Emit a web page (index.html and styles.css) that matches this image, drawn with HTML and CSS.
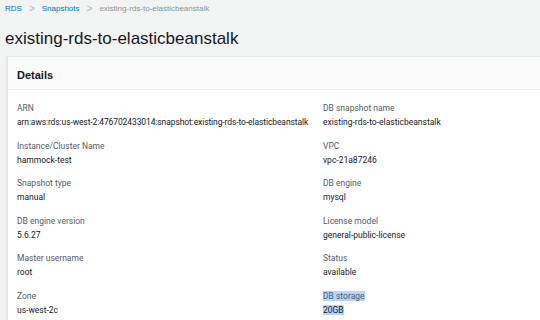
FILE: index.html
```html
<!DOCTYPE html>
<html>
<head>
    <title>existing-rds-to-elasticbeanstalk</title>
    <link rel="stylesheet" href="styles.css">
</head>
<body>
    <div class="page">
        <div class="breadcrumb">
            <a href="#">RDS</a>
            <span class="sep">&gt;</span>
            <a href="#">Snapshots</a>
            <span class="sep">&gt;</span>
            <span class="current">existing-rds-to-elasticbeanstalk</span>
        </div>

        <h1 class="title">existing-rds-to-elasticbeanstalk</h1>

        <div class="panel">
            <div class="panel-header">
                <h2>Details</h2>
            </div>
            <div class="panel-body">
                <div class="column">
                    <div class="field">
                        <div class="label">ARN</div>
                        <div class="value arn">arn:aws:rds:us-west-2:476702433014:snapshot:existing-rds-to-elasticbeanstalk</div>
                    </div>
                    <div class="field">
                        <div class="label">Instance/Cluster Name</div>
                        <div class="value">hammock-test</div>
                    </div>
                    <div class="field">
                        <div class="label">Snapshot type</div>
                        <div class="value">manual</div>
                    </div>
                    <div class="field">
                        <div class="label">DB engine version</div>
                        <div class="value">5.6.27</div>
                    </div>
                    <div class="field">
                        <div class="label">Master username</div>
                        <div class="value">root</div>
                    </div>
                    <div class="field">
                        <div class="label">Zone</div>
                        <div class="value">us-west-2c</div>
                    </div>
                </div>
                <div class="column">
                    <div class="field">
                        <div class="label">DB snapshot name</div>
                        <div class="value">existing-rds-to-elasticbeanstalk</div>
                    </div>
                    <div class="field">
                        <div class="label">VPC</div>
                        <div class="value">vpc-21a87246</div>
                    </div>
                    <div class="field">
                        <div class="label">DB engine</div>
                        <div class="value">mysql</div>
                    </div>
                    <div class="field">
                        <div class="label">License model</div>
                        <div class="value">general-public-license</div>
                    </div>
                    <div class="field">
                        <div class="label">Status</div>
                        <div class="value">available</div>
                    </div>
                    <div class="field">
                        <div class="label"><span class="selected">DB storage</span></div>
                        <div class="value"><span class="selected">20GB</span></div>
                    </div>
                </div>
            </div>
        </div>
    </div>
</body>
</html>
```

FILE: styles.css
```css
* {
    margin: 0;
    padding: 0;
    box-sizing: border-box;
}

body {
    background: #f2f3f3;
    color: #16191f;
    font-family: 'Liberation Sans', Arial, sans-serif;
    overflow: hidden;
}

.page {
    padding: 2px 0 0 5px;
}

.breadcrumb {
    display: flex;
    align-items: center;
    gap: 7px;
    font-size: 8px;
    height: 12px;
    color: #879596;
}

.breadcrumb a {
    color: #0073bb;
    text-decoration: none;
}

.breadcrumb .sep {
    color: #aab7b8;
    font-size: 10px;
}

.title {
    font-size: 17px;
    font-weight: 400;
    color: #16191f;
    margin-top: 14px;
    line-height: 22px;
}

.panel {
    margin: 6px 0 0 2px;
    background: #fff;
    border: 1px solid #e4e7e7;
    border-right: none;
    box-shadow: 0 1px 2px rgba(0, 28, 36, 0.15);
}

.panel-header {
    background: #fafafa;
    border-bottom: 1px solid #eaeded;
    height: 33px;
    padding: 3px 9px 0;
    display: flex;
    align-items: center;
}

.panel-header h2 {
    font-size: 11px;
    font-weight: 700;
    color: #16191f;
}

.panel-body {
    display: flex;
    padding: 11px 9px 0;
}

.column {
    flex: none;
    width: 306px;
}

.column + .column {
    flex: 1;
    width: auto;
}

.field {
    height: 37.5px;
    font-family: Roboto, sans-serif;
    font-size: 8.5px;
    line-height: 14px;
}

.label {
    color: #545b64;
}

.value {
    color: #16191f;
}

.arn {
    white-space: nowrap;
    letter-spacing: -0.1px;
}

.selected {
    background: #b4d5fe;
}
```
